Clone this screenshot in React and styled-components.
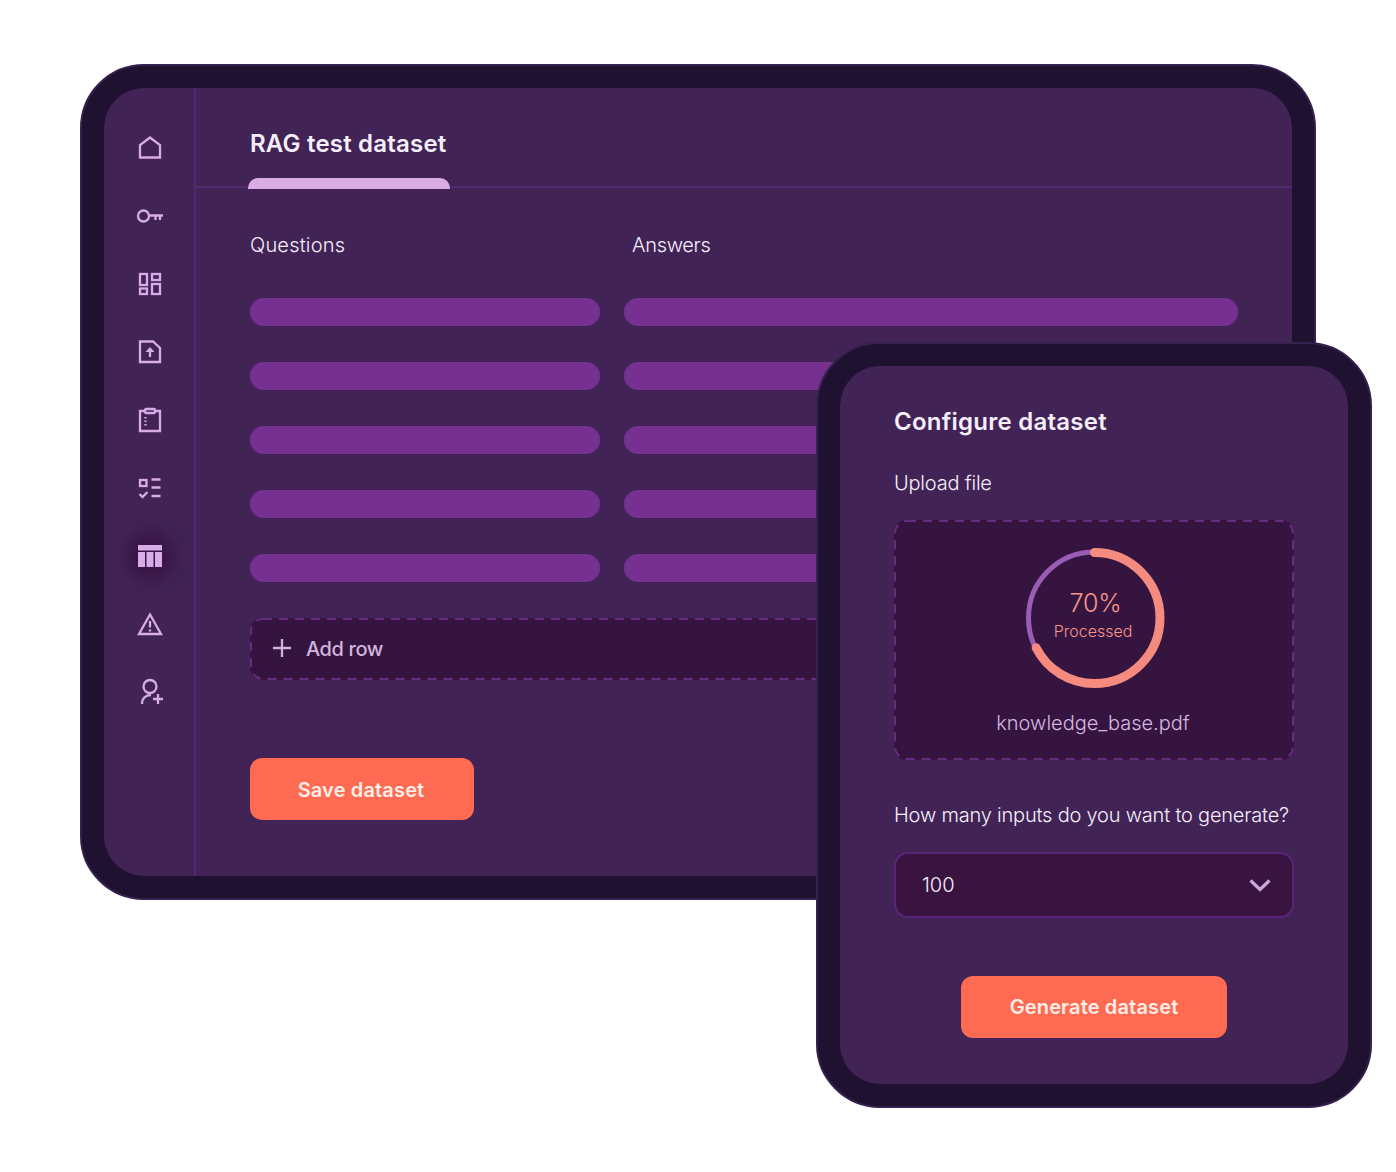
import React from 'react';
import styled, { createGlobalStyle } from 'styled-components';

const GlobalStyle = createGlobalStyle`
  html, body {
    margin: 0;
    padding: 0;
    background: #fff;
    font-family: Inter, "Noto Sans", sans-serif;
  }
`;

const Page = styled.div`
  position: relative;
  box-sizing: border-box;
  width: 1396px;
  height: 1172px;
  padding: 64px 0 0 80px;
  overflow: hidden;
`;

const Device = styled.div`
  box-sizing: border-box;
  display: flex;
  padding: 22px;
  border: 2px solid #35204f;
  border-radius: 64px;
  background: #1f1130;
`;

const Tablet = styled(Device)`
  width: 1236px;
  height: 836px;
`;

const Phone = styled(Device)`
  position: absolute;
  left: 816px;
  top: 342px;
  width: 556px;
  height: 766px;
`;

const Panel = styled.div`
  flex: 1;
  display: flex;
  min-width: 0;
  border-radius: 40px;
  background: #412356;
  overflow: hidden;
`;

const Sidebar = styled.nav`
  box-sizing: border-box;
  flex: 0 0 92px;
  display: flex;
  flex-direction: column;
  align-items: center;
  gap: 40px;
  padding: 46px 0 0 2px;
  border-right: 2px solid #4f2a70;
`;

const NavIcon = styled.div`
  width: 28px;
  height: 28px;
  border-radius: 50%;
  color: #d8ace6;
  background: ${props => (props.$active ? '#391647' : 'transparent')};
  box-shadow: ${props => (props.$active ? '0 0 14px 10px #391647' : 'none')};

  svg {
    display: block;
  }
`;

const Main = styled.main`
  flex: 1;
  min-width: 0;
`;

const Header = styled.header`
  box-sizing: border-box;
  height: 100px;
  padding: 40px 0 0 54px;
  border-bottom: 2px solid #4f2a70;
`;

const Tab = styled.div`
  position: relative;
  width: 198px;
  height: 60px;

  &::after {
    content: '';
    position: absolute;
    left: -2px;
    bottom: -1px;
    width: 202px;
    height: 11px;
    border-radius: 10px 10px 0 0;
    background: #d9ace6;
  }
`;

const Heading = styled.h1`
  margin: 0;
  font-size: 24px;
  line-height: 32px;
  font-weight: 600;
  letter-spacing: 0.2px;
  color: #f6eefa;
  white-space: nowrap;
`;

const Body = styled.div`
  padding: 46px 54px 0 54px;
`;

const TableGrid = styled.div`
  display: grid;
  grid-template-columns: 350px 614px;
  column-gap: 24px;
  row-gap: 36px;
`;

const ColumnLabel = styled.div`
  font-size: 20px;
  line-height: 22px;
  font-weight: 300;
  padding-left: ${props => props.$inset || 0}px;
  letter-spacing: ${props => props.$spacing || 0}px;
  margin-bottom: 6px;
  color: #f6eefa;
`;

const Bar = styled.div`
  height: 28px;
  border-radius: 14px;
  background: #763090;
`;

const DropArea = styled.div`
  position: relative;
  box-sizing: border-box;
  border-radius: 12px;
  background: #361440;
`;

const AddRow = styled(DropArea)`
  display: flex;
  align-items: center;
  gap: 14px;
  width: 988px;
  height: 62px;
  margin-top: 36px;
  padding-left: 22px;
  font-size: 20px;
  font-weight: 500;
  letter-spacing: -0.4px;
  color: #d0b4de;
`;

const Outline = styled.svg`
  position: absolute;
  inset: 0;
  width: 100%;
  height: 100%;
  pointer-events: none;
`;

const OutlineRect = styled.rect`
  x: 1px;
  y: 1px;
  width: calc(100% - 2px);
  height: calc(100% - 2px);
  fill: none;
  stroke: #672c80;
  stroke-width: 2;
  stroke-dasharray: 9 7;
`;

const Button = styled.button`
  display: block;
  height: 62px;
  padding: 0;
  border: 0;
  border-radius: 12px;
  background: #ff6b52;
  color: #fdeee8;
  font-family: inherit;
  font-size: 20px;
  font-weight: 600;
  letter-spacing: 0.15px;
`;

const SaveButton = styled(Button)`
  width: 224px;
  margin-top: 78px;
  padding: 2px 2px 0 0;
`;

const GenerateButton = styled(Button)`
  width: 266px;
  margin: 58px auto 0;
`;

const Form = styled.div`
  flex: 1;
  padding: 40px 54px 0;
`;

const FormTitle = styled(Heading)`
  letter-spacing: 0.25px;
`;

const FieldLabel = styled.div`
  margin-top: ${props => props.$top}px;
  margin-bottom: 23px;
  font-size: 20px;
  line-height: 28px;
  font-weight: 300;
  letter-spacing: ${props => props.$spacing}px;
  color: #f6eefa;
  white-space: nowrap;
`;

const UploadBox = styled(DropArea)`
  display: flex;
  flex-direction: column;
  align-items: center;
  height: 240px;
  padding-top: 27px;
`;

const RingWrap = styled.div`
  position: relative;
  width: 142px;
  height: 142px;
`;

const RingLabel = styled.div`
  position: absolute;
  inset: 0 0 6px;
  display: flex;
  flex-direction: column;
  align-items: center;
  justify-content: center;
  gap: 2px;
  color: #f7958a;
  font-weight: 300;
`;

const Percent = styled.div`
  font-size: 25px;
  line-height: 30px;
  margin-left: 3px;
  letter-spacing: -0.2px;
`;

const Status = styled.div`
  font-size: 16px;
  line-height: 22px;
  margin-right: 2px;
`;

const FileName = styled.div`
  margin-top: 20px;
  font-size: 20px;
  line-height: 28px;
  font-weight: 300;
  margin-right: 2px;
  color: #d4b8e2;
`;

const Select = styled.div`
  box-sizing: border-box;
  display: flex;
  align-items: center;
  justify-content: space-between;
  height: 66px;
  padding: 0 20px 0 26px;
  border: 2px solid #5a2578;
  border-radius: 14px;
  background: #391441;
  font-size: 20px;
  font-weight: 300;
  color: #f6eefa;
`;

const navIcons = [
  <>
    <path d="M4 23.500V11L14 3.500 24 11v12.500z" />
  </>,
  <>
    <circle cx="7.500" cy="14" r="5.500" />
    <path d="M13 13.500h14M19.500 13.500V18M24 13.500V18" />
  </>,
  <>
    <rect x="4" y="4" width="7" height="11" />
    <rect x="16" y="4" width="8" height="6" />
    <rect x="4" y="18.500" width="7" height="5.500" />
    <rect x="16" y="14" width="8" height="10" />
  </>,
  <>
    <path d="M4 3.500h13l7 6.500v14H4z" />
    <path d="M14 19v-6" />
    <path d="M9.500 14 14 9l4.500 5z" fill="currentColor" stroke="none" />
  </>,
  <>
    <path d="M9 5H4v20h20V5h-5" />
    <rect x="9" y="3" width="10" height="4" rx="1" />
    <path d="M9.500 11v1.500M9.500 14.500V16M9.500 18v1.500" />
  </>,
  <>
    <rect x="4" y="6" width="6.500" height="6" />
    <path d="M15.500 5.500h9M15.500 13.500h9M15.500 22h9" />
    <path d="M3.500 20l3 3 5-5" />
  </>,
  <>
    <path
      d="M2 3h24v5.500H2zM2 10h7v15H2zM10.500 10h7v15h-7zM19 10h7v15h-7z"
      fill="currentColor"
      stroke="none"
    />
  </>,
  <>
    <path d="M14 4.500 25 24H3z" />
    <path d="M14 11v6.500M14 19.500v2" />
  </>,
  <>
    <circle cx="14" cy="8.500" r="6.500" />
    <path d="M6 26c0-5.500 3.500-9 9-9M17 21h10M22 16v10" />
  </>,
];

const ACTIVE_NAV = 6;
const ROWS = [0, 1, 2, 3, 4];

const Dashed = () => (
  <Outline>
    <OutlineRect rx="12" />
  </Outline>
);

const ProgressRing = () => (
  <svg width="142" height="142" viewBox="0 0 142 142" fill="none">
    <circle cx="71.500" cy="71" r="66" stroke="#9a5cb4" strokeWidth="5" />
    <circle
      cx="71.500"
      cy="71"
      r="65.500"
      stroke="#f58a7e"
      strokeWidth="9"
      strokeLinecap="round"
      pathLength="360"
      strokeDasharray="243 360"
      transform="rotate(-90 71.500 71)"
    />
  </svg>
);

const App = () => {
  return (
    <Page>
      <GlobalStyle />
      <Tablet>
        <Panel>
          <Sidebar>
            {navIcons.map((icon, index) => (
              <NavIcon key={index} $active={index === ACTIVE_NAV}>
                <svg width="28" height="28" viewBox="0 0 28 28" fill="none" stroke="currentColor" strokeWidth="2.300">
                  {icon}
                </svg>
              </NavIcon>
            ))}
          </Sidebar>
          <Main>
            <Header>
              <Tab>
                <Heading>RAG test dataset</Heading>
              </Tab>
            </Header>
            <Body>
              <TableGrid>
                <ColumnLabel $spacing={0.2}>Questions</ColumnLabel>
                <ColumnLabel $inset={8} $spacing={-0.3}>Answers</ColumnLabel>
                {ROWS.map(row => (
                  <React.Fragment key={row}>
                    <Bar />
                    <Bar />
                  </React.Fragment>
                ))}
              </TableGrid>
              <AddRow>
                <Dashed />
                <svg width="20" height="20" viewBox="0 0 20 20" fill="none" stroke="currentColor" strokeWidth="2.300">
                  <path d="M10 0v18M1 9h18" />
                </svg>
                Add row
              </AddRow>
              <SaveButton>Save dataset</SaveButton>
            </Body>
          </Main>
        </Panel>
      </Tablet>
      <Phone>
        <Panel>
          <Form>
            <FormTitle>Configure dataset</FormTitle>
            <FieldLabel $top={31} $spacing={-0.2}>Upload file</FieldLabel>
            <UploadBox>
              <Dashed />
              <RingWrap>
                <ProgressRing />
                <RingLabel>
                  <Percent>70%</Percent>
                  <Status>Processed</Status>
                </RingLabel>
              </RingWrap>
              <FileName>knowledge_base.pdf</FileName>
            </UploadBox>
            <FieldLabel $top={41} $spacing={-0.2}>How many inputs do you want to generate?</FieldLabel>
            <Select>
              100
              <svg width="24" height="14" viewBox="0 0 24 14" fill="none" stroke="#cba9da" strokeWidth="3.200">
                <path d="M2.500 2.500 12 11.500l9.500-9" />
              </svg>
            </Select>
            <GenerateButton>Generate dataset</GenerateButton>
          </Form>
        </Panel>
      </Phone>
    </Page>
  );
};

export default App;
